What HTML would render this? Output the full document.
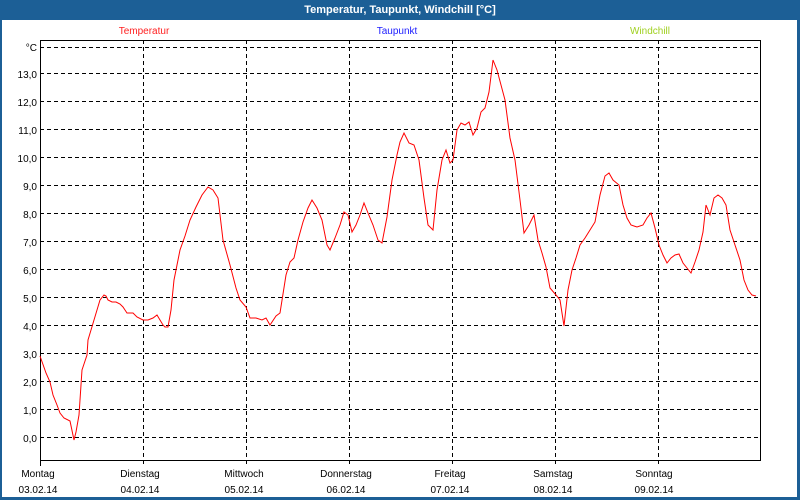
<!DOCTYPE html>
<html><head><meta charset="utf-8"><style>
html,body{margin:0;padding:0;width:800px;height:500px;overflow:hidden;background:#fff;font-family:"Liberation Sans",sans-serif}
</style></head><body>
<svg width="800" height="500" xmlns="http://www.w3.org/2000/svg" style="position:absolute;left:0;top:0">
<rect x="0" y="0" width="800" height="500" fill="#1c5f96"/>
<rect x="2" y="20" width="795" height="477" fill="#fff"/>
<text x="400" y="13" fill="#fff" font-size="11" font-weight="bold" text-anchor="middle" font-family="Liberation Sans, sans-serif">Temperatur, Taupunkt, Windchill [°C]</text>
<g font-size="10" font-family="Liberation Sans, sans-serif">
<text x="144" y="34" fill="#ff2020" text-anchor="middle">Temperatur</text>
<text x="397" y="34" fill="#2020ff" text-anchor="middle">Taupunkt</text>
<text x="650" y="34" fill="#a0d020" text-anchor="middle">Windchill</text>
</g>
<g stroke="#000" stroke-width="1" stroke-dasharray="4,3" fill="none">
<path d="M40 47.5H760M40 73.5H760M40 101.5H760M40 129.5H760M40 157.5H760M40 185.5H760M40 213.5H760M40 241.5H760M40 269.5H760M40 297.5H760M40 325.5H760M40 353.5H760M40 381.5H760M40 409.5H760M40 437.5H760"/>
<path d="M143.5 40V466M246.5 40V466M349.5 40V466M452.5 40V466M555.5 40V466M658.5 40V466"/>
</g>
<path d="M40.5 40.5H760.5V460.5M40.5 40V466M40 460.5H761" stroke="#000" fill="none"/>
<g font-size="10" fill="#000" text-anchor="end" font-family="Liberation Sans, sans-serif">
<text x="37" y="51">°C</text>
<text x="37" y="78">13,0</text><text x="37" y="106">12,0</text><text x="37" y="134">11,0</text><text x="37" y="162">10,0</text>
<text x="37" y="190">9,0</text><text x="37" y="218">8,0</text><text x="37" y="246">7,0</text><text x="37" y="274">6,0</text>
<text x="37" y="302">5,0</text><text x="37" y="330">4,0</text><text x="37" y="358">3,0</text><text x="37" y="386">2,0</text>
<text x="37" y="414">1,0</text><text x="37" y="442">0,0</text>
</g>
<g font-size="10" fill="#000" text-anchor="middle" font-family="Liberation Sans, sans-serif">
<text x="38" y="477">Montag</text><text x="38" y="493">03.02.14</text>
<text x="140" y="477">Dienstag</text><text x="140" y="493">04.02.14</text>
<text x="244" y="477">Mittwoch</text><text x="244" y="493">05.02.14</text>
<text x="346" y="477">Donnerstag</text><text x="346" y="493">06.02.14</text>
<text x="450" y="477">Freitag</text><text x="450" y="493">07.02.14</text>
<text x="553" y="477">Samstag</text><text x="553" y="493">08.02.14</text>
<text x="654" y="477">Sonntag</text><text x="654" y="493">09.02.14</text>
</g>
<polyline fill="none" stroke="#ff0000" stroke-width="1" points="40,356 46,373 50,382 53,395 57,405 60,413 64,418 70,421 74,440 76,432 79,415 82,370 84,364 87,355 88,340 91,330 94,320 97,310 100,300 104,295 106,296 108,300 112,302 116,302 120,304 123,307 125,310 127,313 133,313 137,317 143,320 148,320 153,318 157,315 160,320 163,325 165,327 168,327 171,310 174,280 180,250 185,236 190,220 196,207 202,195 208,187 213,190 218,198 223,240 230,265 236,288 240,300 246,307 250,318 256,318 262,320 266,318 270,325 276,316 280,313 286,275 290,262 294,258 298,240 303,222 308,208 312,200 317,208 322,220 327,245 330,250 335,238 340,225 344,212 348,215 352,232 356,225 360,215 364,203 368,213 373,225 378,240 382,243 387,217 392,180 397,155 400,142 404,133 409,143 414,145 419,160 424,198 428,225 433,230 437,190 442,160 446,150 450,163 453,160 457,130 461,123 465,125 469,122 473,135 477,128 481,112 485,108 489,92 493,60 497,70 501,85 505,100 510,138 515,160 520,200 524,233 529,225 534,215 538,240 542,253 546,267 550,288 556,295 560,300 564,326 568,290 572,270 576,258 580,245 585,238 590,230 595,222 600,195 605,176 609,173 613,180 619,185 623,205 627,218 631,225 637,227 643,225 647,218 651,213 655,228 659,245 663,255 667,263 671,258 675,255 679,254 683,263 687,268 691,273 695,262 699,250 703,232 706,205 710,215 714,198 718,195 722,198 726,205 730,230 735,245 740,260 744,280 748,290 752,295 756,296"/>
</svg>
</body></html>
